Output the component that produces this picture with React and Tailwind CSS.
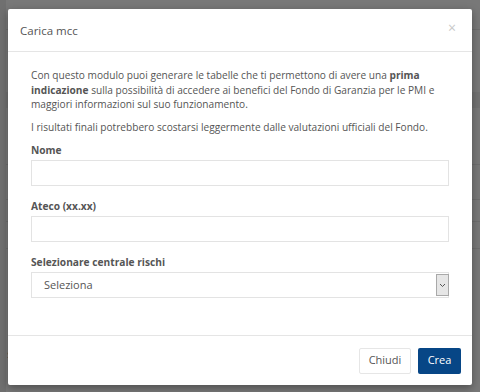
import React from 'react';

const font = { fontFamily: '"Open Sans", "Noto Sans", Arial, sans-serif' };

function Field({ label, children }) {
  return (
    <div className="mb-[13px]">
      <label className="block font-bold text-[10.2px] leading-[14px] mb-[3px] text-[#555]">{label}</label>
      {children}
    </div>
  );
}

export default function App() {
  return (
    <div className="relative w-[480px] h-[392px] overflow-hidden bg-[#787878]" style={font}>
      {/* page behind the overlay */}
      <div className="flex flex-col h-full border-l-[6px] border-[#707070]">
        <div className="h-[30px] border-b border-[#6e6e6e]" />
        <div className="h-[62px]" />
        <div className="h-[16px] bg-[#727272]" />
        <div className="h-[57px] border-b border-[#6e6e6e]" />
        <div className="h-[35px] border-b border-[#6e6e6e]" />
        <div className="h-[22px] border-b border-[#6e6e6e]" />
        <div className="h-[27px] border-b border-[#6e6e6e]" />
        <div className="flex-1 flex items-end pb-[30px] pl-[1px] text-[11px] text-[#4a4a4a]">si</div>
      </div>

      {/* modal */}
      <div className="absolute left-[8px] top-[9px] w-[464px] h-[376px] bg-white rounded-[2px] shadow-[0_3px_8px_rgba(0,0,0,0.35)] flex flex-col">
        <div className="h-[43px] flex items-center justify-between px-[12px] pt-[2px] border-b border-[#e5e5e5]">
          <h4 className="text-[11.5px] text-[#555]">Carica mcc</h4>
          <span className="text-[14px] leading-none text-[#c8c8c8] mr-[4px] -mt-[7px]">×</span>
        </div>

        <div className="flex-1 px-[23px] pt-[16px] text-[10.15px] leading-[14.5px] text-[#555]">
          <p className="mb-[8px]">
            Con questo modulo puoi generare le tabelle che ti permettono di avere una <b>prima indicazione</b> sulla
            possibilità di accedere ai benefici del Fondo di Garanzia per le PMI e maggiori informazioni sul suo
            funzionamento.
          </p>
          <p className="mb-[9px]">I risultati finali potrebbero scostarsi leggermente dalle valutazioni ufficiali del Fondo.</p>

          <Field label="Nome">
            <input className="block w-full h-[26px] border border-[#e3e3e3] outline-none" />
          </Field>
          <Field label="Ateco (xx.xx)">
            <input className="block w-full h-[26px] border border-[#e3e3e3] outline-none" />
          </Field>
          <Field label="Selezionare centrale rischi">
            <div className="flex h-[26px] border border-[#e3e3e3]">
              <span className="flex-1 flex items-center pl-[12px] text-[11px] text-[#555]">Seleziona</span>
              <span className="w-[13px] my-[1px] -mr-px bg-[#e6e6e6] border border-[#a9a9a9] flex items-center justify-center">
                <svg width="7" height="5" viewBox="0 0 7 5">
                  <path d="M1 1l2.5 2.5L6 1" fill="none" stroke="#555" strokeWidth="1" />
                </svg>
              </span>
            </div>
          </Field>
        </div>

        <div className="h-[50px] border-t border-[#e5e5e5] flex items-center justify-end gap-[7px] pr-[11px]">
          <button className="h-[26px] w-[52px] border border-[#e6e6e6] rounded-[2px] bg-white text-[11px] text-[#555]">Chiudi</button>
          <button className="h-[26px] w-[43px] rounded-[2px] bg-[#074686] text-[11px] text-white">Crea</button>
        </div>
      </div>
    </div>
  );
}
